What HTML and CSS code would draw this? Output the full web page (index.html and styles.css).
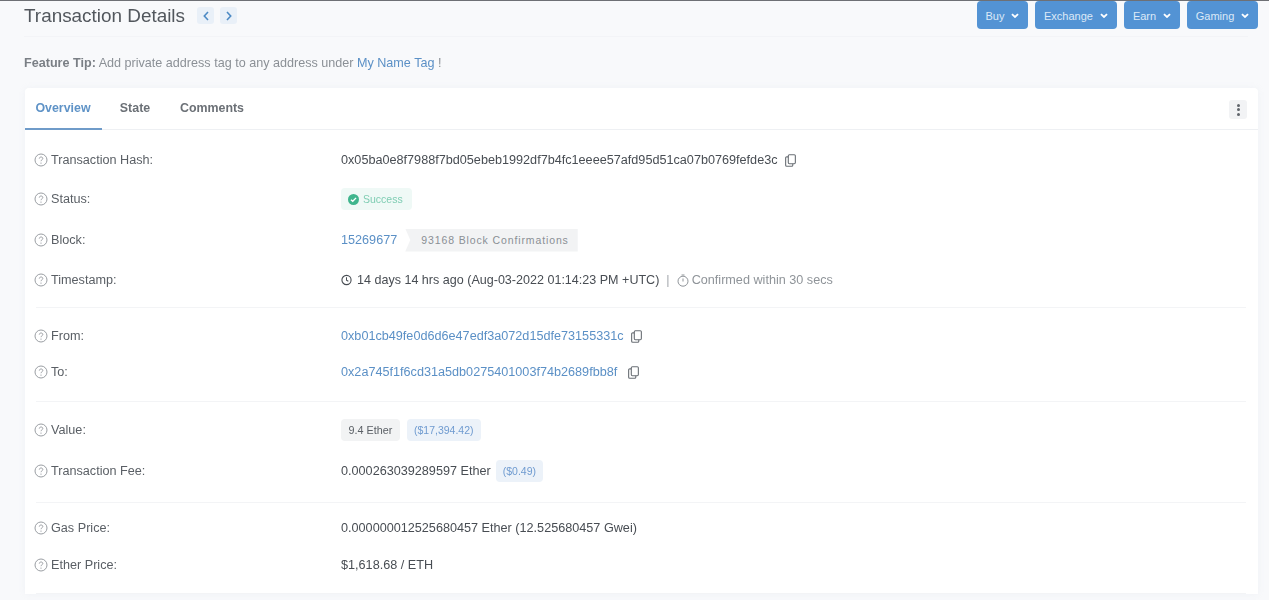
FILE: index.html
```html
<!DOCTYPE html>
<html lang="en">
<head>
<meta charset="utf-8">
<title>Transaction Details</title>
<link rel="stylesheet" href="styles.css">
</head>
<body>
<svg class="defs" width="0" height="0" aria-hidden="true">
  <symbol id="help" viewBox="0 0 14 14"><circle cx="7" cy="7" r="6" fill="none" stroke="currentColor" stroke-width="1"/><path d="M5.3 5.6c0-1 .8-1.6 1.8-1.6s1.7.6 1.7 1.5c0 1.3-1.8 1.3-1.8 2.7" fill="none" stroke="currentColor" stroke-width="1"/><circle cx="7" cy="10.1" r=".7" fill="currentColor"/></symbol>
  <symbol id="copy" viewBox="0 0 12 14"><rect x="3.6" y=".7" width="7.7" height="9.8" rx="1.2" fill="none" stroke="currentColor" stroke-width="1.2"/><path d="M3.6 3H1.9C1.2 3 .7 3.5.7 4.2v8c0 .6.5 1.1 1.2 1.1h5.4c.7 0 1.2-.5 1.2-1.1v-1.700" fill="none" stroke="currentColor" stroke-width="1.2"/></symbol>
  <symbol id="chev" viewBox="0 0 10 6"><path d="M1.200 1.200 5 4.800l3.800-3.600" fill="none" stroke="currentColor" stroke-width="2.300"/></symbol>
</svg>
<div class="page">
  <header class="topbar">
    <div class="title-group">
      <h1 class="title">Transaction Details</h1>
      <a class="pager"><svg width="6" height="10" viewBox="0 0 6 10"><path d="M5 1 1.300 5 5 9" fill="none" stroke="currentColor" stroke-width="1.600"/></svg></a>
      <a class="pager"><svg width="6" height="10" viewBox="0 0 6 10"><path d="M1 1l3.700 4L1 9" fill="none" stroke="currentColor" stroke-width="1.600"/></svg></a>
    </div>
    <nav class="actions">
      <a class="btn btn-buy">Buy <svg class="chev"><use href="#chev"/></svg></a>
      <a class="btn btn-exchange">Exchange <svg class="chev"><use href="#chev"/></svg></a>
      <a class="btn btn-earn">Earn <svg class="chev"><use href="#chev"/></svg></a>
      <a class="btn btn-gaming">Gaming <svg class="chev"><use href="#chev"/></svg></a>
    </nav>
  </header>
  <p class="tip"><b>Feature Tip:</b> Add private address tag to any address under <a class="link">My Name Tag</a> !</p>
  <main class="card">
    <div class="tabs">
      <a class="tab active">Overview</a>
      <a class="tab">State</a>
      <a class="tab">Comments</a>
      <span class="more"><i></i><i></i><i></i></span>
    </div>
    <section class="sec sec-1">
      <div class="row h40"><div class="label"><svg class="help"><use href="#help"/></svg>Transaction Hash:</div><div class="val">0x05ba0e8f7988f7bd05ebeb1992df7b4fc1eeee57afd95d51ca07b0769fefde3c<svg class="copy"><use href="#copy"/></svg></div></div>
      <div class="row h38"><div class="label"><svg class="help"><use href="#help"/></svg>Status:</div><div class="val"><span class="badge success"><svg width="11" height="11" viewBox="0 0 12 12"><circle cx="6" cy="6" r="6" fill="#3fb58d"/><path d="M3.200 6.200 5.200 8l3.600-3.800" fill="none" stroke="#fff" stroke-width="1.500"/></svg>Success</span></div></div>
      <div class="row h44"><div class="label"><svg class="help"><use href="#help"/></svg>Block:</div><div class="val"><a class="link">15269677</a><span class="confirm">93168 Block Confirmations</span></div></div>
      <div class="row h36"><div class="label"><svg class="help"><use href="#help"/></svg>Timestamp:</div><div class="val stamp"><svg class="clock" viewBox="0 0 12 12"><circle cx="6" cy="6" r="5" fill="none" stroke="currentColor" stroke-width="1.200"/><path d="M6 3v3.300l2 1.100" fill="none" stroke="currentColor" stroke-width="1.100"/></svg>14 days 14 hrs ago (Aug-03-2022 01:14:23 PM +UTC)<span class="sep">|</span><span class="muted"><svg class="clock clock-timer" viewBox="0 0 12 13"><circle cx="6" cy="7.200" r="5" fill="none" stroke="currentColor" stroke-width="1"/><path d="M6 4.500v3M4.500 1h3" fill="none" stroke="currentColor" stroke-width="1"/></svg>Confirmed within 30 secs</span></div></div>
    </section>
    <section class="sec sec-2">
      <div class="row h36"><div class="label"><svg class="help"><use href="#help"/></svg>From:</div><div class="val"><a class="link">0xb01cb49fe0d6d6e47edf3a072d15dfe73155331c</a><svg class="copy"><use href="#copy"/></svg></div></div>
      <div class="row h36"><div class="label"><svg class="help"><use href="#help"/></svg>To:</div><div class="val"><a class="link">0x2a745f1f6cd31a5db0275401003f74b2689fbb8f</a><svg class="copy copy-wide"><use href="#copy"/></svg></div></div>
    </section>
    <section class="sec sec-3">
      <div class="row h40"><div class="label"><svg class="help"><use href="#help"/></svg>Value:</div><div class="val"><span class="badge grey">9.4 Ether</span><span class="badge blue">($17,394.42)</span></div></div>
      <div class="row h42"><div class="label"><svg class="help"><use href="#help"/></svg>Transaction Fee:</div><div class="val">0.000263039289597 Ether<span class="badge blue fee">($0.49)</span></div></div>
    </section>
    <section class="sec sec-4">
      <div class="row h36"><div class="label"><svg class="help"><use href="#help"/></svg>Gas Price:</div><div class="val">0.000000012525680457 Ether (12.525680457 Gwei)</div></div>
      <div class="row h38"><div class="label"><svg class="help"><use href="#help"/></svg>Ether Price:</div><div class="val">$1,618.68 / ETH</div></div>
    </section>
  </main>
</div>
</body>
</html>
```
FILE: styles.css
```css
* { box-sizing: border-box; }
html, body { margin: 0; height: 100%; overflow: hidden; }
body {
  background: #f8f9fb;
  border-top: 1px solid #6e7075;
  color: #4a4f55;
  font: 12.650px/20px "Liberation Sans", Arial, sans-serif;
}
.defs { position: absolute; }
.page { padding: 0 11px 0 24px; filter: blur(.45px); }
a { text-decoration: none; }
.link { color: #5b90c6; }

.topbar {
  display: flex;
  justify-content: space-between;
  height: 36px;
  border-bottom: 1px solid #f3f4f7;
  margin-right: 10px;
}
.title-group { display: flex; align-items: center; gap: 6px; height: 29px; }
.title { margin: 0 6px 0 0; font-size: 18.900px; line-height: 29px; font-weight: 400; color: #52575d; }
.pager {
  display: flex; align-items: center; justify-content: center;
  width: 17px; height: 17px; border-radius: 3px;
  background: #e9f0f8; color: #4d8ac4;
}
.actions { display: flex; gap: 7px; margin-right: -10px; }
.btn {
  display: flex; align-items: center; justify-content: center; gap: 7px;
  height: 28px; border-radius: 4px; padding-top: 1px;
  background: #5393d4; color: #dce9f7; font-size: 11px;
}
.btn-buy { width: 51px; }
.btn-exchange { width: 82px; }
.btn-earn { width: 56px; }
.btn-gaming { width: 71px; }
.chev { width: 8px; height: 5px; color: #fff; }

.tip { margin: 16px 0 15px; color: #8b9096; line-height: 20px; font-size: 12.600px; }
.tip b { color: #7a7f85; }

.card {
  width: 1233px; margin-left: 1px;
  background: #fff; border-radius: 4px 4px 0 0;
  box-shadow: 0 0 6px rgba(180, 190, 205, .12);
}
.tabs {
  display: flex; align-items: stretch; position: relative;
  height: 42px;
  border-bottom: 1px solid #eef0f3;
}
.tab {
  display: flex; align-items: center; justify-content: center;
  height: 42px; font-weight: 700; font-size: 12.400px; color: #6b7076;
  border-bottom: 2px solid transparent;
}
.tab:nth-child(1) { width: 77px; padding-right: 1px; }
.tab:nth-child(2) { width: 66px; }
.tab:nth-child(3) { width: 88px; }
.tab.active { color: #5f93c7; border-bottom-color: #6f9bc9; }
.more {
  position: absolute; right: 11px; top: 12px;
  width: 18px; height: 19px; border-radius: 3px; background: #f2f3f5;
  display: flex; flex-direction: column; align-items: center; justify-content: center; gap: 1.500px;
}
.more i { width: 3px; height: 3px; border-radius: 50%; background: #60656b; }

.sec { margin: 0 12px 0 11px; border-bottom: 1px solid #f3f4f6; }
.sec-1 { padding: 10px 0 9px; }
.sec-2 { padding: 10px 0 11px; }
.sec-3 { padding: 8px 0 10px; }
.sec-4 { padding: 7px 0 9px; }

.row { display: flex; align-items: center; }
.h36 { height: 36px; }
.h38 { height: 38px; }
.h40 { height: 40px; }
.h42 { height: 42px; }
.h44 { height: 44px; }

.label { display: flex; align-items: center; width: 305px; color: #5a5f65; }
.help { width: 14px; height: 14px; margin-left: -2px; margin-right: 3px; color: #9a9ea3; }
.val { display: flex; align-items: center; color: #484d53; }
.stamp { font-size: 12.560px; }
.copy { width: 11px; height: 13px; margin-left: 7px; color: #6a6f75; }
.copy-wide { margin-left: 11px; }
.clock { width: 11px; height: 12px; margin-right: 5px; }
.clock-timer { width: 12px; height: 13px; margin-right: 3px; }
.sep { margin: 0 7px; color: #a5a9ae; }
.muted { display: flex; align-items: center; color: #8f9499; font-size: 12.650px; }

.badge {
  display: inline-flex; align-items: center; height: 22px; padding: 0 7px;
  border-radius: 4px; font-size: 10.500px; line-height: 16px;
}
.success { background: #eff9f6; color: #7fcdb3; gap: 4px; width: 71px; }
.grey { background: #f2f3f4; color: #5b6066; width: 59px; justify-content: center; font-size: 10.800px; }
.blue { background: #ecf2f9; color: #6f9bd0; margin-left: 7px; }
.fee { margin-left: 5px; }
.confirm {
  display: inline-flex; align-items: center; height: 23px; margin-left: 8px; padding: 0 9px 0 16px;
  background: #f2f3f4; color: #8a8f95; font-size: 10.500px; line-height: 16px; letter-spacing: .88px;
  clip-path: polygon(0 0, 100% 0, 100% 100%, 0 100%, 5px 50%);
}
```
